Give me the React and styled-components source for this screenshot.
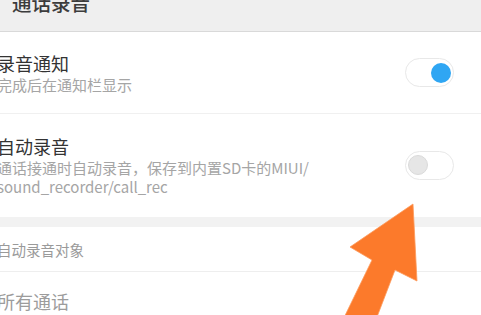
import React from "react";
import styled, { createGlobalStyle } from "styled-components";

const Global = createGlobalStyle`
  html, body {
    margin: 0;
    padding: 0;
    background: #ffffff;
    overflow: hidden;
  }
  body {
    width: 481px;
    height: 315px;
    font-family: "Noto Sans CJK SC", "Noto Sans", sans-serif;
  }
  * { box-sizing: border-box; }
`;

const Screen = styled.div`
  position: relative;
  width: 481px;
  height: 315px;
  overflow: hidden;
  background: #ffffff;
`;

const Content = styled.div`
  margin-left: -3px;
  display: flex;
  flex-direction: column;
`;

const Header = styled.div`
  height: 32px;
  background: #efefef;
  border-bottom: 1px solid #d9d9d9;
  display: flex;
  align-items: flex-start;
  padding-left: 15px;
  overflow: hidden;
`;

const HeaderTitle = styled.div`
  margin-top: -7px;
  font-size: 19.5px;
  line-height: 20px;
  color: #3c3c3c;
  font-weight: 500;
`;

const Row = styled.div`
  display: flex;
  align-items: center;
  justify-content: space-between;
  padding: ${(p) => (p.$tall ? "20px 27px 21px 0" : "19px 27px 19px 0")};
  border-bottom: ${(p) => (p.$last ? "none" : "1px solid #f0f0f0")};
`;

const TextBlock = styled.div`
  display: flex;
  flex-direction: column;
`;

const Title = styled.div`
  font-size: 18px;
  line-height: 24px;
  color: #333333;
`;

const Subtitle = styled.div`
  font-size: 15px;
  line-height: 19px;
  color: #a5a5a5;
`;

const Track = styled.div`
  width: 49px;
  height: 29px;
  border: 1px solid #e8e8e8;
  border-radius: 15px;
  background: #ffffff;
  display: flex;
  align-items: center;
  justify-content: ${(p) => (p.$on ? "flex-end" : "flex-start")};
  padding: 0 2px;
  flex-shrink: 0;
`;

const Knob = styled.div`
  width: 20px;
  height: 20px;
  border-radius: 50%;
  background: ${(p) => (p.$on ? "#2fa6f3" : "#e6e6e6")};
  border: ${(p) => (p.$on ? "none" : "1px solid #dadada")};
`;

const Band = styled.div`
  height: 10px;
  background: #f2f2f2;
`;

const SectionHeader = styled.div`
  padding: 13px 0 11px 0;
  font-size: 14.5px;
  line-height: 20px;
  color: #9a9a9a;
  border-bottom: 1px solid #eeeeee;
`;

const Item = styled.div`
  padding-top: 17px;
  font-size: 18px;
  line-height: 24px;
  color: #9c9c9c;
`;

const ArrowLayer = styled.svg`
  position: absolute;
  left: 0;
  top: 0;
  pointer-events: none;
`;

function Toggle({ on }) {
  return (
    <Track $on={on}>
      <Knob $on={on} />
    </Track>
  );
}

export default function App() {
  return (
    <>
      <Global />
      <Screen>
        <Content>
          <Header>
            <HeaderTitle>通话录音</HeaderTitle>
          </Header>
          <Row>
            <TextBlock>
              <Title>录音通知</Title>
              <Subtitle>完成后在通知栏显示</Subtitle>
            </TextBlock>
            <Toggle on />
          </Row>
          <Row $tall $last>
            <TextBlock>
              <Title>自动录音</Title>
              <Subtitle>
                通话接通时自动录音，保存到内置SD卡的MIUI/
                <br />
                sound_recorder/call_rec
              </Subtitle>
            </TextBlock>
            <Toggle on={false} />
          </Row>
          <Band />
          <SectionHeader>自动录音对象</SectionHeader>
          <Item>所有通话</Item>
        </Content>
        <ArrowLayer width="481" height="315" viewBox="0 0 481 315">
          <polygon
            points="413,204 417,281 395,270 372,330 338,330 372,260 350,247"
            fill="#fc7a2b"
            stroke="#fd9a5c"
            strokeWidth="0.8"
            strokeLinejoin="round"
          />
        </ArrowLayer>
      </Screen>
    </>
  );
}
